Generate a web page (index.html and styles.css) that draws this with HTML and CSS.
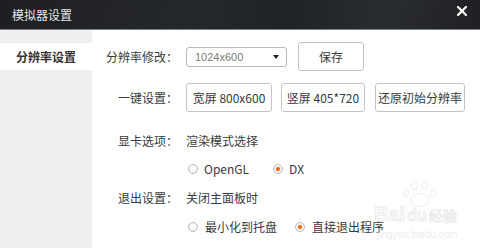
FILE: index.html
```html
<!DOCTYPE html>
<html lang="zh-CN">
<head>
<meta charset="utf-8">
<title>模拟器设置</title>
<link rel="stylesheet" href="styles.css">
</head>
<body>
<div class="window">
  <div class="titlebar">
    <span class="title">模拟器设置</span>
    <svg class="close" width="10" height="10" viewBox="0 0 10 10"><path d="M1 1L9 9M9 1L1 9" stroke="#fff" stroke-width="2.2" stroke-linecap="square"/></svg>
  </div>
  <div class="body">
    <div class="sidebar">
      <div class="nav-item active">分辨率设置</div>
    </div>
    <div class="main">
      <div class="row row-1">
        <div class="label">分辨率修改：</div>
        <div class="content">
          <div class="select"><span class="select-text">1024x600</span><span class="caret"></span></div>
          <div class="btn btn-save">保存</div>
        </div>
      </div>
      <div class="row row-2">
        <div class="label">一键设置：</div>
        <div class="content">
          <div class="btn btn-wide">宽屏 800x600</div>
          <div class="btn btn-tall">竖屏 405*720</div>
          <div class="btn btn-reset">还原初始分辨率</div>
        </div>
      </div>
      <div class="row row-3">
        <div class="label">显卡选项：</div>
        <div class="content">渲染模式选择</div>
      </div>
      <div class="row row-4">
        <div class="label"></div>
        <div class="content radios">
          <span class="radio"><span class="dot"></span>OpenGL</span>
          <span class="radio radio-gap1 checked"><span class="dot"></span>DX</span>
        </div>
      </div>
      <div class="row row-5">
        <div class="label">退出设置：</div>
        <div class="content">关闭主面板时</div>
      </div>
      <div class="row row-6">
        <div class="label"></div>
        <div class="content radios">
          <span class="radio"><span class="dot"></span>最小化到托盘</span>
          <span class="radio radio-gap2 checked"><span class="dot"></span>直接退出程序</span>
        </div>
      </div>
    </div>
  </div>
  <div class="watermark">
    <div class="wm-paw">
      <span class="toe t1"></span><span class="toe t2"></span><span class="toe t3"></span><span class="toe t4"></span><span class="pad"></span>
    </div>
    <div class="wm-logo">Bai<span class="wm-du">du</span><span class="wm-jy">经验</span></div>
    <div class="wm-url">jingyan.baidu.com</div>
  </div>
</div>
</body>
</html>
```

FILE: styles.css
```css
* { box-sizing: border-box; }
html, body { margin: 0; padding: 0; }
body {
  width: 480px;
  height: 248px;
  overflow: hidden;
  background: #fff;
  font-family: "Noto Sans CJK SC", "Noto Sans", sans-serif;
  font-size: 12px;
  color: #3a3a3a;
}
.window {
  position: relative;
  width: 480px;
  height: 248px;
  display: flex;
  flex-direction: column;
}
.titlebar {
  height: 30px;
  flex: none;
  background: linear-gradient(100deg, #1d1f22 0%, #25282b 40%, #202326 60%, #2a2d30 80%, #1e2023 100%);
  border-bottom: 1px solid #7d7f82;
  display: flex;
  align-items: center;
  justify-content: space-between;
  padding: 0 13px 0 12px;
}
.title {
  color: #e6e6e6;
  font-size: 12px;
  line-height: 14px;
}
.close { display: block; margin-top: -8px; }
.body {
  flex: 1;
  display: flex;
}
.sidebar {
  width: 92px;
  flex: none;
  background: #efefef;
  padding-top: 13px;
}
.nav-item {
  height: 27px;
  line-height: 27px;
  text-align: center;
  font-weight: bold;
  color: #333;
  font-size: 12px;
}
.nav-item.active { background: #fff; }
.main {
  flex: 1;
  padding-top: 12px;
}
.row {
  display: flex;
  align-items: center;
}
.label {
  width: 86px;
  flex: none;
  text-align: right;
  color: #3a3a3a;
  line-height: 16px;
}
.content {
  margin-left: 8px;
  display: flex;
  align-items: center;
  line-height: 16px;
}
.row-1, .row-2 { height: 29px; }
.row-2 { margin-top: 12px; }
.row-3 { height: 20px; margin-top: 19px; }
.row-4 { height: 20px; margin-top: 8px; }
.row-5 { height: 20px; margin-top: 9px; }
.row-6 { height: 20px; margin-top: 9px; }

.select {
  width: 101px;
  height: 20px;
  border: 1px solid #b9b9b9;
  border-radius: 3px;
  display: flex;
  align-items: center;
  justify-content: space-between;
  padding: 0 7px 0 8px;
  background: #fff;
}
.select-text {
  font-family: "Liberation Sans", Arial, sans-serif;
  font-size: 11px;
  color: #7a7a7a;
}
.caret {
  width: 0;
  height: 0;
  border-left: 3.5px solid transparent;
  border-right: 3.5px solid transparent;
  border-top: 4px solid #222;
}
.btn {
  height: 29px;
  border: 1px solid #c4c4c4;
  border-radius: 3px;
  background: #fff;
  display: flex;
  align-items: center;
  justify-content: center;
  color: #3a3a3a;
  font-size: 12px;
}
.btn-save { width: 66px; margin-left: 11px; }
.btn-wide { width: 86px; }
.btn-tall { width: 84px; margin-left: 9px; }
.btn-reset { width: 90px; margin-left: 10px; }

.radios { margin-left: 10px; }
.radio {
  display: inline-flex;
  align-items: center;
  color: #3a3a3a;
}
.dot {
  width: 10px;
  height: 10px;
  border-radius: 50%;
  border: 1px solid #bdbdbd;
  background: radial-gradient(circle at 50% 40%, #fff 0%, #f2f2f2 70%, #e4e4e4 100%);
  margin-right: 6px;
  position: relative;
}
.checked .dot::after {
  content: "";
  position: absolute;
  left: 2px;
  top: 2px;
  width: 4px;
  height: 4px;
  border-radius: 50%;
  background: #f26a10;
  box-shadow: 0 0 1px #f8a060;
}
.radio-gap1 { margin-left: 24px; }
.radio-gap2 { margin-left: 18px; }
.row-6 .dot { margin-right: 7px; }

.watermark {
  position: absolute;
  left: 374px;
  top: 180px;
  width: 100px;
  pointer-events: none;
  white-space: nowrap;
}
.wm-paw {
  position: relative;
  width: 36px;
  height: 24px;
  margin-left: 28px;
}
.toe, .pad {
  position: absolute;
  border: 1.5px solid #efefef;
  border-radius: 50%;
}
.t1 { left: 1px; top: 9px; width: 6px; height: 8px; }
.t2 { left: 9px; top: 1px; width: 7px; height: 9px; }
.t3 { left: 19px; top: 1px; width: 7px; height: 9px; }
.t4 { left: 28px; top: 9px; width: 6px; height: 8px; }
.pad { left: 8px; top: 13px; width: 20px; height: 14px; }
.wm-logo {
  font-family: "Liberation Sans", Arial, sans-serif;
  font-size: 20px;
  font-weight: bold;
  line-height: 20px;
  color: #fbfbfb;
  -webkit-text-stroke: 0.8px #ebebeb;
}
.wm-du { font-size: 16px; margin: 0 2px; }
.wm-jy {
  font-family: "Noto Sans CJK SC", sans-serif;
  font-size: 14px;
  font-weight: normal;
}
.wm-url {
  font-family: "Liberation Sans", Arial, sans-serif;
  font-size: 10px;
  line-height: 12px;
  color: #ededed;
  margin-top: 3px;
  margin-left: 3px;
}
```
